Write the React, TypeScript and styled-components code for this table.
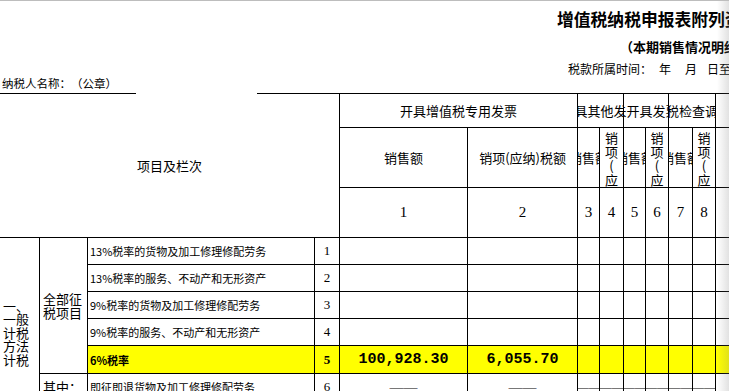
import React from 'react';
import styled, { createGlobalStyle } from 'styled-components';

const CJK = `"Noto Sans CJK SC", "Noto Sans", sans-serif`;
const SERIF = `"Liberation Serif", "Noto Sans CJK SC", serif`;
const MONO = `"Liberation Mono", "DejaVu Sans Mono", monospace`;

const GlobalStyle = createGlobalStyle`
  html, body {
    margin: 0;
    padding: 0;
    background: #ffffff;
  }
  body {
    font-family: ${CJK};
    color: #000000;
    text-spacing-trim: space-all;
  }
`;

const Sheet = styled.div`
  position: relative;
  width: 729px;
  height: 391px;
  overflow: hidden;
  box-sizing: border-box;
  border-top: 1px solid #bdbdbd;
  white-space: nowrap;
`;

const Title = styled.div`
  height: 36px;
  line-height: 36px;
  padding-left: 557px;
  font-size: 16.8px;
  font-weight: 700;
`;

const Subtitle = styled.div`
  height: 25px;
  line-height: 20px;
  padding-left: 620px;
  font-size: 13px;
  font-weight: 700;
`;

const Period = styled.div`
  display: flex;
  height: 14px;
  line-height: 14px;
  padding-left: 568px;
  font-size: 12px;
`;

const Gap = styled.span<{ $w: number }>`
  display: inline-block;
  width: ${p => p.$w}px;
  flex-shrink: 0;
`;

const TaxpayerRow = styled.div`
  height: 17px;
  line-height: 15px;
  padding-left: 2px;
  font-size: 11.5px;
`;

const Grid = styled.table`
  border-collapse: separate;
  border-spacing: 0;
  table-layout: fixed;
  width: 761px;
  font-family: ${CJK};
  font-size: 13px;
`;

const Col = styled.col<{ $w: number }>`
  width: ${p => p.$w}px;
`;

const Row = styled.tr<{ $h: number }>`
  height: ${p => p.$h}px;
`;

const Cell = styled.td<{ $top?: boolean; $fill?: boolean }>`
  padding: 0;
  border-right: 1px solid #000000;
  border-bottom: 1px solid #000000;
  border-top: ${p => (p.$top ? '1px solid #000000' : 'none')};
  text-align: center;
  vertical-align: middle;
  overflow: hidden;
  background: ${p => (p.$fill ? '#ffff00' : 'transparent')};
`;

/* top rule of the item column is broken like the sheet underline */
const ItemCell = styled(Cell)`
  background: linear-gradient(
      to right,
      #000000 0 136px,
      transparent 136px 257px,
      #000000 257px
    )
    top left / 100% 1px no-repeat;
`;

const GroupCell = styled(Cell)`
  text-align: left;
  white-space: normal;
  padding-left: 3px;
  line-height: 13.5px;
`;

const LabelCell = styled(Cell)<{ $bold?: boolean }>`
  text-align: left;
  padding-left: 2px;
  font-size: 11px;
  font-weight: ${p => (p.$bold ? 700 : 400)};
`;

const NumberCell = styled(Cell)<{ $bold?: boolean; $size?: number }>`
  font-family: ${SERIF};
  font-size: ${p => p.$size ?? 13}px;
  font-weight: ${p => (p.$bold ? 700 : 400)};
`;

const AmountCell = styled(Cell)`
  font-family: ${MONO};
  font-size: 15px;
  font-weight: 700;
`;

const DashCell = styled(Cell)`
  font-size: 14px;
  line-height: 14px;
`;

const Clip = styled.div`
  display: flex;
  justify-content: center;
  width: 100%;
  overflow: hidden;
`;

const NoShrink = styled.span`
  flex-shrink: 0;
`;

const Stack = styled.div`
  height: 59px;
  padding-top: 3px;
  box-sizing: border-box;
  overflow: hidden;
  line-height: 14px;
`;

const StackChar = styled.div`
  height: 14px;
`;

const Fade = styled.div`
  position: absolute;
  top: 0;
  right: 0;
  bottom: 0;
  width: 12px;
  background: linear-gradient(to right, rgba(120, 120, 120, 0), rgba(120, 120, 120, 0.22));
  pointer-events: none;
`;

const widths = [40, 48, 227, 25, 128, 110, 22, 24, 22, 23, 24, 23, 45];
const groups = ['开具其他发票', '未开具发票', '纳税检查调整'];
// only the top of the wrapped heading fits in the narrow columns
const stacked = ['销', '项', '(', '应'];

const Clipped: React.FC<{ text: string }> = ({ text }) => (
  <Clip>
    <NoShrink>{text}</NoShrink>
  </Clip>
);

type Line = { label: string; no: number; bold?: boolean; amount?: string; tax?: string; dash?: boolean };

const lines: Line[] = [
  { label: '13%税率的货物及加工修理修配劳务', no: 1 },
  { label: '13%税率的服务、不动产和无形资产', no: 2 },
  { label: '9%税率的货物及加工修理修配劳务', no: 3 },
  { label: '9%税率的服务、不动产和无形资产', no: 4 },
  { label: '6%税率', no: 5, bold: true, amount: '100,928.30', tax: '6,055.70' },
  { label: '即征即退货物及加工修理修配劳务', no: 6, dash: true },
  { label: '即征即退服务、不动产和无形资产', no: 7, dash: true },
];

const App: React.FC = () => {
  return (
    <Sheet>
      <GlobalStyle />
      <Title>增值税纳税申报表附列资料（一）</Title>
      <Subtitle>（本期销售情况明细）</Subtitle>
      <Period>
        税款所属时间：<Gap $w={7} />年<Gap $w={14} />月<Gap $w={10} />日至
      </Period>
      <TaxpayerRow>纳税人名称：（公章）</TaxpayerRow>
      <Grid>
        <colgroup>
          {widths.map((w, i) => (
            <Col key={i} $w={w} />
          ))}
        </colgroup>
        <tbody>
          <Row $h={35}>
            <ItemCell colSpan={4} rowSpan={3}>项目及栏次</ItemCell>
            <Cell $top colSpan={2}>开具增值税专用发票</Cell>
            {groups.map(g => (
              <Cell $top colSpan={2} key={g}>
                <Clipped text={g} />
              </Cell>
            ))}
            <Cell $top />
          </Row>
          <Row $h={60}>
            <Cell>销售额</Cell>
            <Cell>销项(应纳)税额</Cell>
            {groups.map(g => (
              <React.Fragment key={g}>
                <Cell>
                  <Clipped text="销售额" />
                </Cell>
                <Cell>
                  <Stack>
                    {stacked.map((c, i) => (
                      <StackChar key={i}>{c}</StackChar>
                    ))}
                  </Stack>
                </Cell>
              </React.Fragment>
            ))}
            <Cell />
          </Row>
          <Row $h={50}>
            {[1, 2, 3, 4, 5, 6, 7, 8].map(n => (
              <NumberCell $size={15} key={n}>{n}</NumberCell>
            ))}
            <Cell />
          </Row>
          {lines.map((l, i) => (
            <Row $h={l.no === 5 ? 28 : 27} key={l.no}>
              {i === 0 && <GroupCell rowSpan={7}>一、一般计税方法计税</GroupCell>}
              {i === 0 && <GroupCell rowSpan={5}>全部征税项目</GroupCell>}
              {i === 5 && <GroupCell rowSpan={2}>其中：即征即退项目</GroupCell>}
              <LabelCell $bold={l.bold} $fill={l.bold}>{l.label}</LabelCell>
              <NumberCell $bold={l.bold} $fill={l.bold}>{l.no}</NumberCell>
              {l.dash ? (
                <>
                  <DashCell>──</DashCell>
                  <DashCell>──</DashCell>
                  {[0, 1, 2, 3, 4, 5].map(k => (
                    <DashCell key={k}>
                      <Clipped text="──" />
                    </DashCell>
                  ))}
                </>
              ) : (
                <>
                  <AmountCell $fill={l.bold}>{l.amount}</AmountCell>
                  <AmountCell $fill={l.bold}>{l.tax}</AmountCell>
                  {[0, 1, 2, 3, 4, 5].map(k => (
                    <Cell $fill={l.bold} key={k} />
                  ))}
                </>
              )}
              <Cell $fill={l.bold} />
            </Row>
          ))}
        </tbody>
      </Grid>
      <Fade />
    </Sheet>
  );
};

export default App;
